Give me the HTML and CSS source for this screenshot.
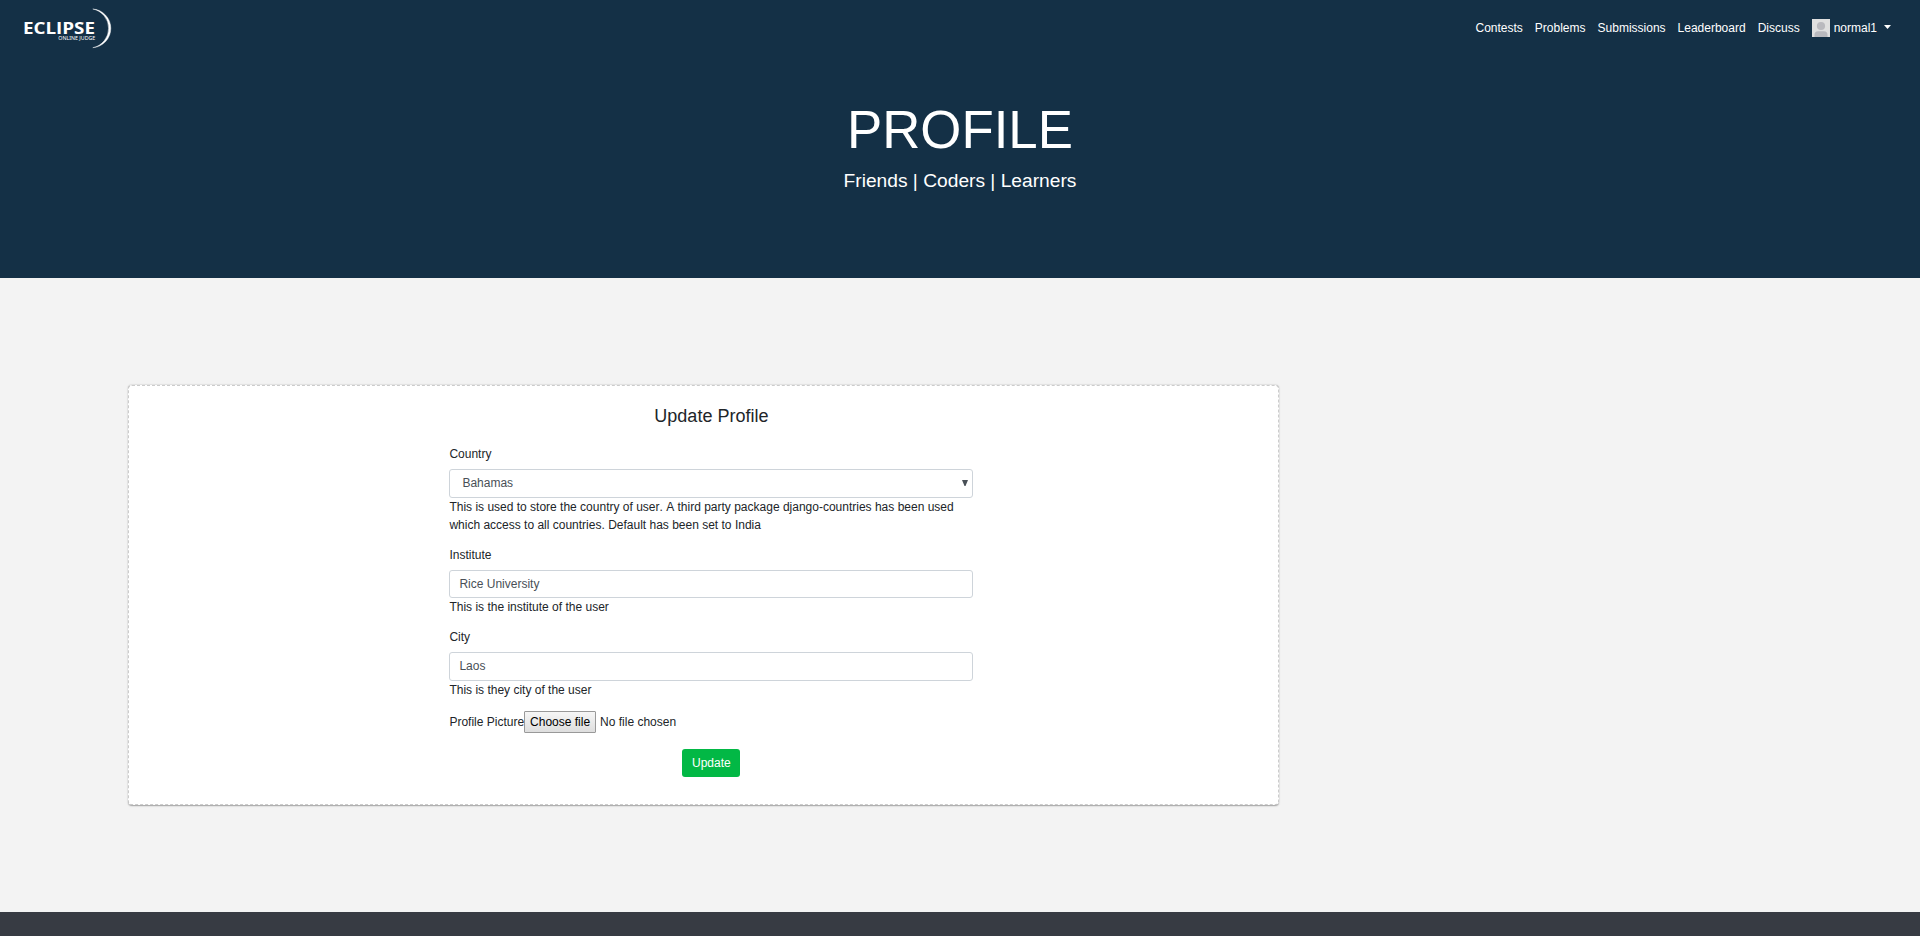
FILE: index.html
```html
<!DOCTYPE html>
<html lang="en">
<head>
<meta charset="utf-8">
<title>Profile</title>
<link rel="stylesheet" href="styles.css">
</head>
<body>
<header class="hero">
  <nav class="navbar">
    <a class="brand" href="#" aria-label="Eclipse Online Judge">
      <svg width="96" height="48" viewBox="0 0 96 48">
        <text class="brand-name" x="0" y="29.7" textLength="72" lengthAdjust="spacingAndGlyphs">ECLIPSE</text>
        <text class="brand-sub" x="35.3" y="36.2" textLength="37" lengthAdjust="spacingAndGlyphs">ONLINE JUDGE</text>
        <path d="M69.3 5A19.4 19.4 0 0 1 69.3 43.7A19.75 19.75 0 0 0 69.3 5Z" transform="translate(.5 0)" fill="#fff" stroke="#fff" stroke-width=".4"/>
      </svg>
    </a>
    <div class="menu">
      <a href="#">Contests</a>
      <a href="#">Problems</a>
      <a href="#">Submissions</a>
      <a href="#">Leaderboard</a>
      <a href="#">Discuss</a>
      <a class="user" href="#">
        <svg width="18" height="18" viewBox="0 0 18 18">
          <rect width="18" height="18" fill="#dfdfdf"/>
          <circle cx="9" cy="7" r="4.1" fill="#b9b9be"/>
          <path d="M2.5 18v-2.2a3.6 3.6 0 0 1 3.6-3.6h5.8a3.6 3.6 0 0 1 3.6 3.6V18z" fill="#b9b9be"/>
        </svg>
        <span>normal1</span>
        <svg class="caret" width="7" height="4" viewBox="0 0 7 4"><path d="M0 0h7L3.5 4z" fill="#fff"/></svg>
      </a>
    </div>
  </nav>
  <h1>PROFILE</h1>
  <p class="lead">Friends | Coders | Learners</p>
</header>
<main>
  <section class="card">
    <form class="form">
      <h4>Update Profile</h4>
      <div class="group">
        <label for="country">Country</label>
        <div class="select-wrap">
          <select class="control select" id="country"><option>Bahamas</option></select>
          <svg class="arrow" width="6" height="6" viewBox="0 0 6 6"><path d="M0 0h6L3.5 6h-1z" fill="#495057"/></svg>
        </div>
        <div class="help">This is used to store the country of user. A third party package django-countries has been used which access to all countries. Default has been set to India</div>
      </div>
      <div class="group">
        <label for="institute">Institute</label>
        <input class="control" id="institute" value="Rice University">
        <div class="help">This is the institute of the user</div>
      </div>
      <div class="group">
        <label for="city">City</label>
        <input class="control" id="city" value="Laos">
        <div class="help">This is they city of the user</div>
      </div>
      <div class="file"><span>Profile Picture</span><button type="button" class="choose">Choose file</button><span class="chosen">No file chosen</span></div>
      <button type="button" class="update">Update</button>
    </form>
  </section>
</main>
<footer class="footer"></footer>
</body>
</html>
```
FILE: styles.css
```css
* { box-sizing: border-box; }
html, body { margin: 0; height: 100%; }
body {
  display: flex;
  flex-direction: column;
  overflow: hidden;
  background: #f3f3f3;
  color: #212529;
  font: 12px/1.5 "Liberation Sans", Arial, sans-serif;
}
a { color: #fff; text-decoration: none; }
h1, h4, p { margin: 0; font-weight: 400; }

.hero {
  flex: none;
  height: 278px;
  background: #143046;
  color: #fff;
  text-align: center;
}
.navbar {
  display: flex;
  justify-content: space-between;
  align-items: center;
  height: 56px;
  padding: 0 29px 0 23px;
}
.brand { display: flex; }
.brand-name { font: 700 16.5px "Open Sans", sans-serif; fill: #fff; }
.brand-sub { font: 400 5px "Noto Sans", sans-serif; fill: #fff; }
.menu { display: flex; gap: 12px; }
.user { display: flex; align-items: center; }
.user span { margin: 0 7px 0 4px; }
.caret { margin-top: -2px; }
h1 { margin-top: 42px; font-size: 52.8px; line-height: 64.8px; }
.lead { margin-top: 4px; font-size: 19.2px; line-height: 28.8px; }

main { flex: none; height: 634px; padding: 106.6px 0 0 127.6px; }
.card {
  width: 1151.6px;
  height: 420.4px;
  padding: 20.6px 0 0 320.8px;
  background: #fff;
  border: 1px dashed #ccc;
  border-radius: 4px;
  box-shadow: 0 .5px 1.5px rgba(0, 0, 0, .35);
}
.form { width: 524px; }
h4 { font-size: 18px; line-height: 21.6px; margin-bottom: 17.4px; text-align: center; }
.group { margin-bottom: 12px; }
label { display: block; margin-bottom: 6px; }
.help { font-kerning: none; }
.control {
  display: block;
  width: 100%;
  height: 28.5px;
  padding: 4px 9px;
  border: 1px solid #ced4da;
  border-radius: 3px;
  background: #fff;
  color: #495057;
  font: inherit;
}
.select-wrap { position: relative; }
.select { appearance: none; padding-left: 12px; }
.arrow { position: absolute; right: 5px; top: 11px; }
.file { display: flex; align-items: center; height: 22px; }
.choose {
  width: 72px;
  height: 22px;
  padding: 0;
  border: 1px solid #999;
  border-radius: 1px;
  background: linear-gradient(#f6f6f6, #dedede);
  color: #000;
  font: inherit;
}
.chosen { margin-left: 4px; }
.update {
  display: block;
  width: 58px;
  height: 28px;
  margin: 16px auto 0;
  padding: 0;
  border: 0;
  border-radius: 3px;
  background: #02b845;
  color: #fff;
  font: inherit;
}
.footer { flex: 1; background: #373b43; }
```
